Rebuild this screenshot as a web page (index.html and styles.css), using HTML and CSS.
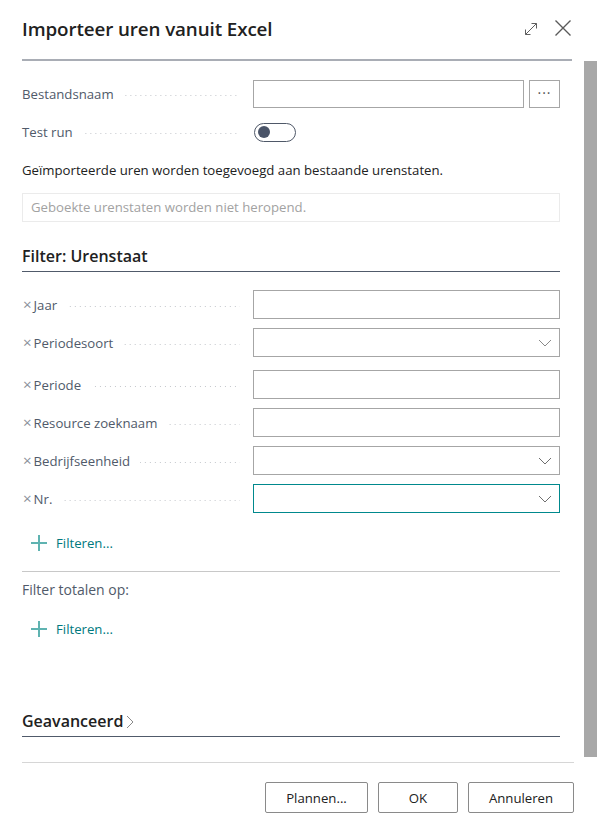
FILE: index.html
```html
<!DOCTYPE html>
<html lang="nl">
<head>
<meta charset="utf-8">
<title>Importeer uren vanuit Excel</title>
<link rel="stylesheet" href="styles.css">
</head>
<body>
<div class="dialog">
  <header class="header">
    <h1 class="title">Importeer uren vanuit Excel</h1>
    <div class="header-actions">
      <svg class="icon-expand" width="16" height="16" viewBox="0 0 16 16" aria-hidden="true">
        <path d="M2.5 13.5 L13.5 2.5 M8.5 2.5 H13.5 V7.5 M2.5 8.5 V13.5 H7.5" fill="none" stroke="#5f5f5f" stroke-width="1"/>
      </svg>
      <svg class="icon-close" width="18" height="18" viewBox="0 0 18 18" aria-hidden="true">
        <path d="M1.5 1.5 L16.5 16.5 M16.5 1.5 L1.5 16.5" fill="none" stroke="#5a5a5a" stroke-width="1.4"/>
      </svg>
    </div>
  </header>

  <div class="main">
    <div class="content">
      <div class="field field-file">
        <div class="label"><span class="label-text">Bestandsnaam</span><span class="leader"></span></div>
        <div class="file-control">
          <div class="input"></div>
          <div class="assist">&middot;&middot;&middot;</div>
        </div>
      </div>

      <div class="field field-toggle">
        <div class="label"><span class="label-text">Test run</span><span class="leader"></span></div>
        <div class="toggle"><span class="knob"></span></div>
      </div>

      <p class="info">Geïmporteerde uren worden toegevoegd aan bestaande urenstaten.</p>

      <div class="readonly">Geboekte urenstaten worden niet heropend.</div>

      <h2 class="section-title">Filter: Urenstaat</h2>

      <div class="filters">
        <div class="field">
          <div class="label"><span class="remove">×</span><span class="label-text">Jaar</span><span class="leader"></span></div>
          <div class="input"></div>
        </div>
        <div class="field field-gap">
          <div class="label"><span class="remove">×</span><span class="label-text">Periodesoort</span><span class="leader"></span></div>
          <div class="input select">
            <svg class="chev" width="14" height="8" viewBox="0 0 14 8" aria-hidden="true"><path d="M1 1 L7 7 L13 1" fill="none" stroke="#8a8a8a" stroke-width="1"/></svg>
          </div>
        </div>
        <div class="field">
          <div class="label"><span class="remove">×</span><span class="label-text">Periode</span><span class="leader"></span></div>
          <div class="input"></div>
        </div>
        <div class="field">
          <div class="label"><span class="remove">×</span><span class="label-text">Resource zoeknaam</span><span class="leader"></span></div>
          <div class="input"></div>
        </div>
        <div class="field">
          <div class="label"><span class="remove">×</span><span class="label-text">Bedrijfseenheid</span><span class="leader"></span></div>
          <div class="input select">
            <svg class="chev" width="14" height="8" viewBox="0 0 14 8" aria-hidden="true"><path d="M1 1 L7 7 L13 1" fill="none" stroke="#6f6f6f" stroke-width="1"/></svg>
          </div>
        </div>
        <div class="field">
          <div class="label"><span class="remove">×</span><span class="label-text">Nr.</span><span class="leader"></span></div>
          <div class="input select focused">
            <svg class="chev" width="14" height="8" viewBox="0 0 14 8" aria-hidden="true"><path d="M1 1 L7 7 L13 1" fill="none" stroke="#6f6f6f" stroke-width="1"/></svg>
          </div>
        </div>
      </div>

      <div class="add-filter add-first">
        <svg width="16" height="16" viewBox="0 0 16 16" aria-hidden="true"><path d="M8 0 V16 M0 8 H16" stroke="#5fb3b1" stroke-width="2"/></svg>
        <span>Filteren...</span>
      </div>

      <hr class="divider">

      <p class="totals">Filter totalen op:</p>

      <div class="add-filter add-second">
        <svg width="16" height="16" viewBox="0 0 16 16" aria-hidden="true"><path d="M8 0 V16 M0 8 H16" stroke="#5fb3b1" stroke-width="2"/></svg>
        <span>Filteren...</span>
      </div>

      <h2 class="section-title advanced">Geavanceerd<svg class="chev-right" width="8" height="14" viewBox="0 0 8 14" aria-hidden="true"><path d="M1 1 L7 7 L1 13" fill="none" stroke="#8a8a8a" stroke-width="1"/></svg></h2>
    </div>
    <div class="scrollbar"></div>
  </div>

  <footer class="footer">
    <button class="btn btn-plan">Plannen...</button>
    <button class="btn btn-ok">OK</button>
    <button class="btn btn-cancel">Annuleren</button>
  </footer>
</div>
</body>
</html>
```

FILE: styles.css
```css
* { box-sizing: border-box; }

html, body {
  margin: 0;
  padding: 0;
  background: #ffffff;
}

body {
  font-family: "Open Sans", "Noto Sans", "Liberation Sans", sans-serif;
  font-size: 13.2px;
  color: #212121;
}

.dialog {
  width: 597px;
  height: 820px;
  display: flex;
  flex-direction: column;
  overflow: hidden;
}

/* Header */
.header {
  height: 61px;
  margin: 0 25px 0 22px;
  border-bottom: 2px solid #a9adb5;
  display: flex;
  align-items: flex-start;
  justify-content: space-between;
  flex-shrink: 0;
}

.title {
  margin: 15px 0 0 0;
  font-size: 18.8px;
  font-weight: 600;
  line-height: 28px;
  color: #212121;
  letter-spacing: -0.1px;
}

.header-actions {
  display: flex;
  align-items: center;
  gap: 15px;
  margin-top: 19px;
}

.icon-expand { margin-top: 2px; }

/* Main */
.main {
  flex: 1;
  display: flex;
  min-height: 0;
}

.content {
  flex: 1;
  padding: 19px 24px 0 22px;
}

.scrollbar {
  width: 13px;
  background: #a8a8a8;
  margin-top: 0;
  margin-bottom: 5px;
}

/* Fields */
.field {
  display: grid;
  grid-template-columns: 231px 1fr;
  align-items: center;
  height: 29px;
}

.label {
  display: flex;
  align-items: center;
  color: #505a6a;
  font-size: 13.2px;
  padding-right: 13px;
  height: 100%;
}

.label-text { white-space: nowrap; }

.leader {
  flex: 1;
  height: 1px;
  margin-left: 10px;
  margin-top: 3px;
  background-image: linear-gradient(to right, #c4c7cc 1px, transparent 1px);
  background-size: 5px 1px;
  background-repeat: repeat-x;
  background-position: right center;
}

.remove {
  color: #8a8f99;
  font-size: 15px;
  line-height: 1;
  margin-left: 1px;
  margin-right: 2px;
}

.input {
  height: 29px;
  border: 1px solid #a6a6a6;
  background: #fff;
  position: relative;
}

.select .chev {
  position: absolute;
  right: 7px;
  top: 10px;
}

.input.focused { border-color: #00898d; }

.field-file { height: 28px; }

.file-control {
  display: flex;
  gap: 5px;
  height: 28px;
}

.file-control .input {
  flex: 1;
  height: 28px;
}

.assist {
  width: 31px;
  height: 28px;
  border: 1px solid #a6a6a6;
  display: flex;
  align-items: center;
  justify-content: center;
  color: #555;
  font-size: 14px;
  letter-spacing: 1px;
  line-height: 1;
  padding-bottom: 2px;
}

.field-toggle {
  margin-top: 14px;
  height: 20px;
}

.toggle {
  width: 42px;
  height: 19px;
  margin-left: 1px;
  border: 1px solid #4f5868;
  border-radius: 10px;
  position: relative;
}

.knob {
  position: absolute;
  left: 3px;
  top: 2.5px;
  width: 12px;
  height: 12px;
  border-radius: 50%;
  background: #4a5468;
}

.info {
  margin: 18px 0 0 0;
  line-height: 20px;
  color: #212121;
}

.readonly {
  margin-top: 13px;
  height: 29px;
  border: 1px solid #ebebeb;
  padding-left: 8px;
  line-height: 27px;
  color: #a2a2a2;
}

.section-title {
  margin: 22px 0 0 0;
  font-size: 16px;
  font-weight: 600;
  line-height: 24px;
  padding-bottom: 3px;
  border-bottom: 1px solid #505a6a;
  color: #212121;
  display: flex;
  align-items: center;
}

.filters {
  margin-top: 18px;
  display: flex;
  flex-direction: column;
  gap: 9px;
}

.field-gap { margin-bottom: 4px; }

.add-filter {
  display: flex;
  align-items: center;
  gap: 9px;
  padding-left: 9px;
  color: #00797e;
  line-height: 20px;
}

.add-first { margin-top: 20px; }

.divider {
  margin: 18px 0 0 0;
  border: 0;
  border-top: 1px solid #c8c8c8;
  height: 0;
}

.totals {
  margin: 8px 0 0 0;
  line-height: 20px;
  font-size: 14px;
  color: #505a6a;
}

.add-second { margin-top: 19px; }

.advanced { margin-top: 70px; }

.chev-right { margin-left: 3px; margin-top: 1px; }

/* Footer */
.footer {
  flex-shrink: 0;
  margin: 0 23px 0 22px;
  border-top: 1px solid #d6d6d6;
  height: 58px;
  display: flex;
  justify-content: flex-end;
  align-items: flex-start;
  gap: 10px;
  padding-top: 19px;
}

.btn {
  height: 31px;
  border: 1px solid #8a8a8a;
  border-radius: 2px;
  background: #fff;
  font-family: inherit;
  font-size: 13.2px;
  color: #212121;
  padding: 0;
}

.btn-plan { width: 103px; }
.btn-ok { width: 80px; }
.btn-cancel { width: 106px; }
```
